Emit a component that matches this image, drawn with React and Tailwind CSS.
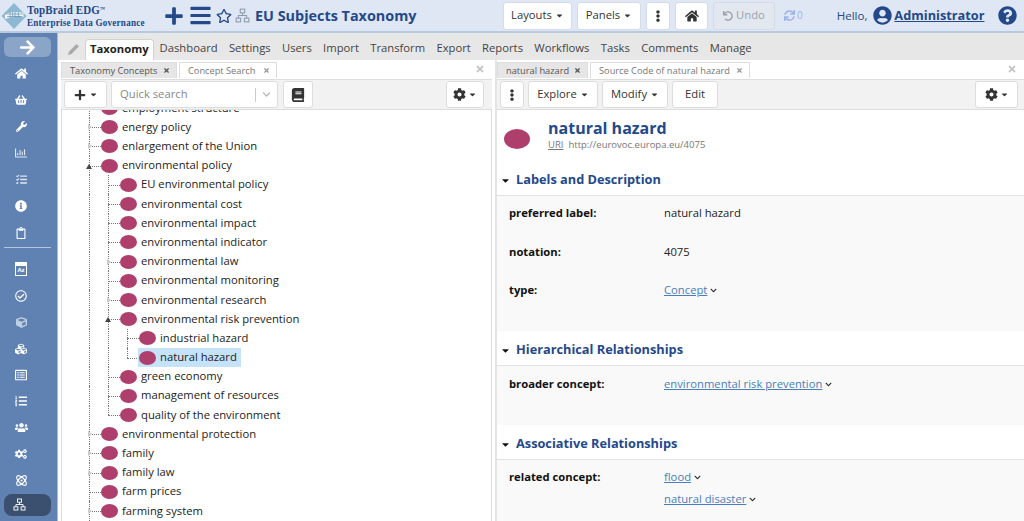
import { Atom } from 'lucide-react';
import {
  FaArrowRight, FaBars, FaBook, FaCaretDown, FaChevronDown, FaCog, FaCogs, FaCube, FaCubes,
  FaEllipsisV, FaHome, FaInfoCircle, FaListOl, FaPlus, FaQuestionCircle, FaRegChartBar,
  FaRegCheckCircle, FaRegClipboard, FaRegListAlt, FaRegStar, FaShoppingBasket, FaSync,
  FaTasks, FaTimes, FaUndo, FaUserCircle, FaUsers, FaWrench,
} from 'react-icons/fa';

const font = "font-['Open_Sans',sans-serif]";

function Sitemap({ size = 20, className = '' }) {
  return (
    <svg width={size} height={size} viewBox="0 0 20 20" fill="none" stroke="currentColor" strokeWidth="1.4" className={className}>
      <rect x="7" y="1.5" width="6" height="5" />
      <rect x="1.5" y="13.5" width="6" height="5" />
      <rect x="12.5" y="13.5" width="6" height="5" />
      <path d="M10 6.5V10M4.5 13.5V10H15.5V13.5" />
    </svg>
  );
}

function Logo() {
  return (
    <svg width="26" height="28" viewBox="0 0 26 28" className="shrink-0">
      <path d="M13 1L25.5 14L13 27L0.5 14Z" fill="#8db8d4" />
      <path d="M4 12L11 10L11 15L4 17Z" fill="#f4f7fa" />
      <path d="M12 10L17 10L17 14L12 15Z" fill="#e7eef5" />
      <path d="M18 10L22.5 11L22.5 15L18 14Z" fill="#f4f7fa" />
      <path d="M4 12H22M6 14.5H21M9 10V16M14 10V15" stroke="#5f7f9c" strokeWidth="0.6" fill="none" />
    </svg>
  );
}

function AzIcon() {
  return (
    <div className="w-[12px] h-[14px] bg-white flex flex-col justify-end">
      <div className="h-[9px] mx-[1px] mb-[1px] bg-[#5f82b3] text-white text-[6px] leading-[9px] font-bold text-center">Az</div>
    </div>
  );
}

const railIcons = [
  <FaHome size={13} />,
  <FaShoppingBasket size={12} />,
  <FaWrench size={11} />,
  <FaRegChartBar size={12} className="opacity-80" />,
  <FaTasks size={11} className="opacity-80" />,
  <FaInfoCircle size={12} />,
  <FaRegClipboard size={12} />,
];

const railIcons2 = [
  <AzIcon />,
  <FaRegCheckCircle size={12} />,
  <FaCube size={11} className="opacity-60" />,
  <FaCubes size={12} />,
  <FaRegListAlt size={12} />,
  <FaListOl size={12} />,
  <FaUsers size={13} />,
  <FaCogs size={12} />,
  <Atom size={13} />,
];

function Rail() {
  return (
    <div className="w-[58px] shrink-0 bg-[#5f82b3] border-r border-[#a9bcd6] flex flex-col items-start pl-[4px] pt-[4px] text-white">
      <div className="w-[47px] h-[20px] rounded-md bg-[#8ba5c9] flex items-center justify-center">
        <FaArrowRight size={17} />
      </div>
      <div className="flex flex-col">
        {railIcons.map((icon, i) => (
          <div key={i} className="h-[26.6px] w-[34px] flex items-center justify-center first:mt-[3px]">{icon}</div>
        ))}
      </div>
      <div className="w-[47px] h-[1px] bg-[#b4c6de] mt-[1px] mb-[8px]" />
      <div className="flex flex-col">
        {railIcons2.map((icon, i) => (
          <div key={i} className="h-[26.4px] w-[34px] flex items-center justify-center">{icon}</div>
        ))}
      </div>
      <div className="w-[47px] h-[22px] rounded-lg bg-[#3b4f6e] flex items-center pl-[9px]">
        <Sitemap size={13} />
      </div>
    </div>
  );
}

function TopButton({ children, className = '' }) {
  return (
    <div className={`h-[28px] bg-white border border-[#d5dbe4] rounded-[3px] flex items-center justify-center text-[11.25px] text-[#333] ${className}`}>
      {children}
    </div>
  );
}

function Header() {
  return (
    <div className={`h-[33px] shrink-0 bg-[#dfe7f4] border-b-2 border-[#b9c9e0] flex items-center ${font}`}>
      <div className="w-[49px] pl-[1px] shrink-0 flex"><Logo /></div>
      <div className="-ml-[22px] w-[120px] shrink-0 text-[#244a8a] font-['Liberation_Serif',serif] font-bold leading-none whitespace-nowrap">
        <div className="text-[13.5px] leading-[14px] tracking-[0.2px] origin-left scale-x-[0.81]">TopBraid EDG<sup className="text-[6px]">™</sup></div>
        <div className="text-[10.5px] leading-[11px] tracking-[0.25px] origin-left scale-x-[0.87]">Enterprise Data Governance</div>
      </div>
      <FaPlus size={20} className="ml-[17px] text-[#244a8a]" />
      <FaBars size={23} className="ml-[5px] text-[#244a8a]" />
      <FaRegStar size={16} className="ml-[4px] text-[#244a8a]" />
      <Sitemap size={15} className="ml-[3px] text-[#8d99ad]" />
      <div className="ml-[5px] w-[248px] text-[14.4px] font-bold text-[#24498a] whitespace-nowrap">EU Subjects Taxonomy</div>
      <TopButton className="w-[69px] gap-[3px]">Layouts <FaCaretDown size={9} /></TopButton>
      <TopButton className="w-[64px] gap-[3px] ml-[5px]">Panels <FaCaretDown size={9} /></TopButton>
      <TopButton className="w-[24px] ml-[5px]"><FaEllipsisV size={12} /></TopButton>
      <TopButton className="w-[33px] ml-[5px]"><FaHome size={14} /></TopButton>
      <TopButton className="w-[62px] ml-[5px] gap-[3px] !bg-[#e3e8f0] !text-[#9aa1ac]"><FaUndo size={10} />Undo</TopButton>
      <FaSync size={11} className="ml-[9px] text-[#9db2e8]" />
      <span className="ml-[2px] text-[10px] text-[#9db2e8]">0</span>
      <span className="ml-[34px] text-[11.5px] text-[#24498a]">Hello,</span>
      <FaUserCircle size={19} className="ml-[6px] text-[#24498a]" />
      <span className="ml-[2px] text-[12.75px] font-bold underline text-[#24498a]">Administrator</span>
      <FaQuestionCircle size={19} className="ml-[13px] text-[#24498a]" />
    </div>
  );
}

const navItems = ['Dashboard', 'Settings', 'Users', 'Import', 'Transform', 'Export', 'Reports', 'Workflows', 'Tasks', 'Comments', 'Manage'];

function Nav() {
  return (
    <div className="h-[27px] shrink-0 bg-[#e7e7e7] flex items-end pl-[9px] text-[11.25px] text-[#444]">
      <svg width="14" height="14" viewBox="0 0 14 14" className="mb-[4px] mr-[4px] text-[#aaa]" fill="currentColor">
        <path d="M2 9.5L9.5 2L12 4.5L4.5 12L1 13Z" />
      </svg>
      <div className="h-[21px] px-[4px] bg-white border border-b-0 border-[#d2d2d2] rounded-t-[4px] font-bold text-[#222] leading-[18px]">Taxonomy</div>
      <div className="flex gap-[11.3px] ml-[6px] h-[21px] leading-[18px]">
        {navItems.map(n => <span key={n}>{n}</span>)}
      </div>
    </div>
  );
}

function PaneTabs({ tabs, widths }) {
  return (
    <div className="h-[19px] shrink-0 flex items-end bg-white pr-[7px] pb-[1px]">
      {tabs.map((t, i) => (
        <div
          key={t}
          className={`h-[16px] border border-b-0 border-[#ddd] flex items-center justify-between pl-[8px] pr-[6px] text-[9.25px] ${i === 0 ? 'bg-[#e6e6e6] text-[#555]' : 'bg-white text-[#777] ml-[2px]'} ${widths[i]}`}
        >
          <span className="whitespace-nowrap">{t}</span>
          <FaTimes size={7} className={i === 0 ? 'text-[#555]' : 'text-[#999]'} />
        </div>
      ))}
      <FaTimes size={10} className="ml-auto mb-[4px] text-[#c4c4c4]" />
    </div>
  );
}

function ToolButton({ children, className = '' }) {
  return (
    <div className={`h-[27px] shrink-0 bg-white border border-[#ddd] rounded-[3px] flex items-center justify-center text-[11.25px] text-[#333] ${className}`}>
      {children}
    </div>
  );
}

const treeRows = [
  { level: 0, label: 'energy policy', toggle: 'closed' },
  { level: 0, label: 'enlargement of the Union', toggle: 'closed' },
  { level: 0, label: 'environmental policy', toggle: 'open' },
  { level: 1, label: 'EU environmental policy' },
  { level: 1, label: 'environmental cost' },
  { level: 1, label: 'environmental impact' },
  { level: 1, label: 'environmental indicator' },
  { level: 1, label: 'environmental law', toggle: 'closed' },
  { level: 1, label: 'environmental monitoring' },
  { level: 1, label: 'environmental research', toggle: 'closed' },
  { level: 1, label: 'environmental risk prevention', toggle: 'open' },
  { level: 2, label: 'industrial hazard' },
  { level: 2, label: 'natural hazard', selected: true, last: true },
  { level: 1, label: 'green economy' },
  { level: 1, label: 'management of resources' },
  { level: 1, label: 'quality of the environment', last: true },
  { level: 0, label: 'environmental protection', toggle: 'closed' },
  { level: 0, label: 'family', toggle: 'closed' },
  { level: 0, label: 'family law', toggle: 'closed' },
  { level: 0, label: 'farm prices' },
  { level: 0, label: 'farming system', toggle: 'closed' },
];

function Guide({ x, half }) {
  return (
    <div
      className={`absolute top-0 w-0 border-l border-dotted border-[#777] ${half ? 'h-1/2' : 'h-full'}`}
      style={{ left: x }}
    />
  );
}

function TreeRow({ row, showL1 }) {
  const base = 27 + row.level * 19;
  return (
    <div className="relative h-[19.2px] flex items-center text-[11.25px] text-[#222] whitespace-nowrap" style={{ paddingLeft: base + 12 }}>
      <Guide x={27} />
      {showL1 && row.level >= 1 && <Guide x={46} half={row.level === 1 && row.last} />}
      {row.level === 2 && <Guide x={65} half={row.last} />}
      <div className="absolute top-1/2 w-[12px] border-t border-dotted border-[#777]" style={{ left: base }} />
      {row.toggle === 'closed' && (
        <div className="absolute top-1/2 -mt-[3px] w-0 h-0 border-y-[3px] border-y-transparent border-l-[4px] border-l-[#ccc]" style={{ left: base - 1 }} />
      )}
      {row.toggle === 'open' && (
        <div className="absolute top-1/2 -mt-[2px] w-0 h-0 border-x-[3px] border-x-transparent border-b-[5px] border-b-[#444]" style={{ left: base - 3 }} />
      )}
      <div className={`relative flex items-center h-[19px] pr-[4px] ${row.selected ? 'bg-[#c4e3f8] -ml-[1px] pl-[1px]' : ''}`}>
        <span className="w-[17px] h-[14px] rounded-[50%] bg-[#ae3f6c] shrink-0" />
        <span className="ml-[4px]">{row.label}</span>
      </div>
    </div>
  );
}

function TreePane() {
  return (
    <div className="w-[431px] shrink-0 flex flex-col overflow-hidden">
      <PaneTabs tabs={['Taxonomy Concepts', 'Concept Search']} widths={['w-[116px]', 'w-[98px]']} />
      <div className="h-[31px] shrink-0 bg-[#f2f2f2] border-y border-[#ddd] flex items-center pl-[3px] pr-[8px]">
        <ToolButton className="w-[43px] gap-[3px]"><FaPlus size={12} /><FaCaretDown size={9} /></ToolButton>
        <div className="ml-[4px] w-[167px] h-[27px] shrink-0 bg-white border border-[#ddd] rounded-[3px] flex items-center text-[11.25px] text-[#888] pl-[8px]">
          Quick search
          <span className="ml-auto w-[1px] h-[14px] bg-[#ccc]" />
          <FaChevronDown size={9} className="mx-[6px] text-[#bbb]" />
        </div>
        <ToolButton className="w-[30px] ml-[5px]"><FaBook size={14} /></ToolButton>
        <ToolButton className="w-[38px] ml-auto gap-[2px]"><FaCog size={13} /><FaCaretDown size={9} /></ToolButton>
      </div>
      <div className="flex-1 overflow-hidden border-l border-[#ddd] border-r">
        <div className="-mt-[11.5px]">
          <TreeRow row={{ level: 0, label: 'employment structure' }} />
          {treeRows.map((row, i) => <TreeRow key={row.label} row={row} showL1={i >= 3 && i <= 15} />)}
        </div>
      </div>
    </div>
  );
}

function SectionHead({ title, className = '' }) {
  return (
    <div className={`h-[35px] bg-white border-b border-[#e2e2e2] flex items-center pl-[3px] pt-[4px] ${className}`}>
      <FaCaretDown size={11} className="text-[#111]" />
      <span className="ml-[5px] text-[12.75px] font-bold text-[#24498a] whitespace-nowrap">{title}</span>
    </div>
  );
}

function Field({ label, children, className = '' }) {
  return (
    <div className={`flex items-start pl-[12px] text-[11.25px] leading-[16px] ${className}`}>
      <span className="w-[155px] shrink-0 font-bold text-[#111]">{label}</span>
      <div className="text-[#222]">{children}</div>
    </div>
  );
}

function ValueLink({ children }) {
  return (
    <span className="inline-flex items-center gap-[3px]">
      <span className="text-[#4a7ebb] underline">{children}</span>
      <FaChevronDown size={7} className="text-[#222]" />
    </span>
  );
}

function DetailPane() {
  return (
    <div className="flex-1 min-w-0 flex flex-col overflow-hidden border-l-2 border-[#e4e4e4] ml-[3px]">
      <PaneTabs tabs={['natural hazard', 'Source Code of natural hazard']} widths={['w-[91px]', 'w-[160px]']} />
      <div className="h-[31px] shrink-0 bg-[#f2f2f2] border-y border-[#ddd] flex items-center pl-[3px] pr-[6px]">
        <ToolButton className="w-[24px]"><FaEllipsisV size={12} /></ToolButton>
        <ToolButton className="w-[70px] ml-[4px] gap-[3px]">Explore <FaCaretDown size={9} /></ToolButton>
        <ToolButton className="w-[66px] ml-[4px] gap-[3px]">Modify <FaCaretDown size={9} /></ToolButton>
        <ToolButton className="w-[46px] ml-[4px]">Edit</ToolButton>
        <ToolButton className="w-[43px] ml-auto gap-[2px]"><FaCog size={13} /><FaCaretDown size={9} /></ToolButton>
      </div>
      <div className="flex-1 overflow-hidden bg-[#f9f9f9]">
        <div className="bg-white h-[51px] flex items-start pl-[7px] pt-[9px]">
          <span className="w-[26px] h-[20px] mt-[10px] rounded-[50%] bg-[#ae3f6c] shrink-0" />
          <div className="ml-[18px]">
            <div className="text-[16px] leading-[19px] font-bold text-[#24498a]">natural hazard</div>
            <div className="text-[9.5px] leading-[13px] text-[#777]"><span className="underline">URI</span><span className="ml-[5px]">http://eurovoc.europa.eu/4075</span></div>
          </div>
        </div>
        <SectionHead title="Labels and Description" />
        <Field label="preferred label:" className="mt-[9px]">natural hazard</Field>
        <Field label="notation:" className="mt-[22.5px]">4075</Field>
        <Field label="type:" className="mt-[22.5px]"><ValueLink>Concept</ValueLink></Field>
        <SectionHead title="Hierarchical Relationships" className="mt-[33px]" />
        <Field label="broader concept:" className="mt-[10px]"><ValueLink>environmental risk prevention</ValueLink></Field>
        <SectionHead title="Associative Relationships" className="mt-[33px]" />
        <Field label="related concept:" className="mt-[9px]">
          <div><ValueLink>flood</ValueLink></div>
          <div className="mt-[6px]"><ValueLink>natural disaster</ValueLink></div>
        </Field>
      </div>
    </div>
  );
}

export default function App() {
  return (
    <div className={`h-[521px] w-[1024px] overflow-hidden flex flex-col bg-white ${font}`}>
      <Header />
      <div className="flex-1 min-h-0 flex">
        <Rail />
        <div className="flex-1 min-w-0 flex flex-col">
          <Nav />
          <div className="flex-1 min-h-0 flex pl-[3px]">
            <TreePane />
            <DetailPane />
          </div>
        </div>
      </div>
    </div>
  );
}
